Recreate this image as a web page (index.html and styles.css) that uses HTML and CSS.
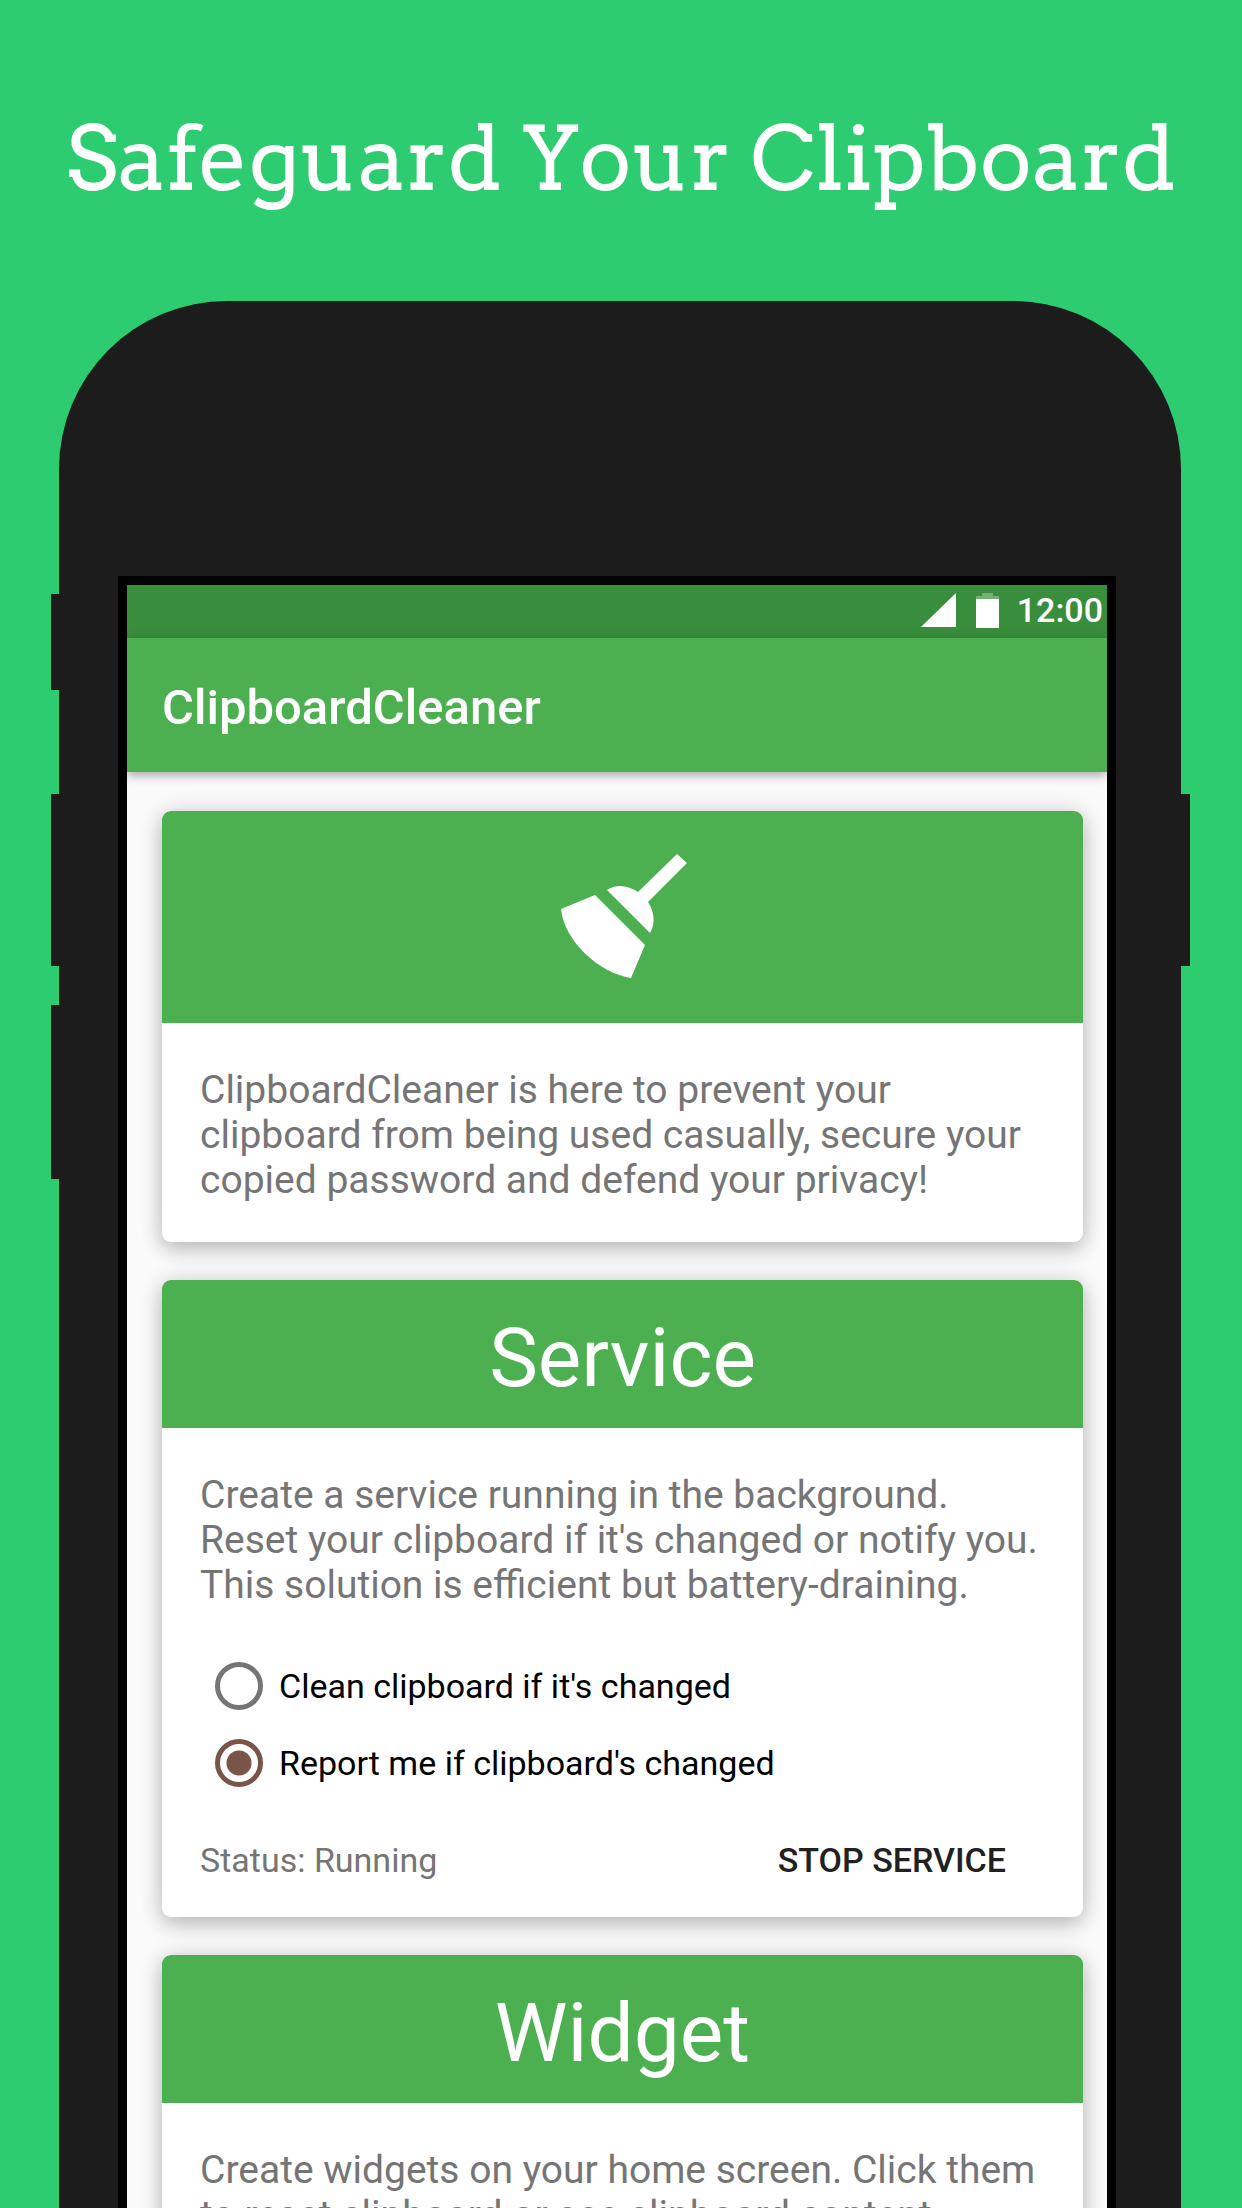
FILE: index.html
```html
<!DOCTYPE html>
<html lang="en">
<head>
<meta charset="utf-8">
<meta name="viewport" content="width=device-width, initial-scale=1">
<title>ClipboardCleaner</title>
<link rel="stylesheet" href="styles.css">
</head>
<body>
<main class="poster">
  <h1 class="headline">Safeguard Your Clipboard</h1>

  <div class="phone">
    <span class="key key-mute"></span>
    <span class="key key-up"></span>
    <span class="key key-down"></span>
    <span class="key key-power"></span>

    <div class="screen">
      <div class="status-bar">
        <svg class="signal" viewBox="0 0 35 34" aria-hidden="true"><path d="M35 0v34H0z"/></svg>
        <svg class="battery" viewBox="0 0 23 35" aria-hidden="true"><path class="battery-empty" d="M6 0h11v3h6v3H0V3h6z"/><path d="M0 6h23v29H0z"/></svg>
        <span class="clock">12:00</span>
      </div>
      <header class="toolbar"><h2 class="app-title">ClipboardCleaner</h2></header>

      <div class="cards">
        <section class="card">
          <div class="card-header card-header-icon">
            <svg class="broom" viewBox="0 0 126 125" aria-hidden="true">
              <path d="M116 0l10 9-39 39c6 9 8 21 2 31L46 36c10-7 22-4 31 2z"/>
              <path d="M34 41l50 50-14 33C37 119 3 86 0 55z"/>
            </svg>
          </div>
          <p class="card-text card-text-last">ClipboardCleaner is here to prevent your clipboard from being used casually, secure your copied password and defend your privacy!</p>
        </section>

        <section class="card">
          <h3 class="card-header">Service</h3>
          <p class="card-text">Create a service running in the background. Reset your clipboard if it's changed or notify you. This solution is efficient but battery-draining.</p>
          <form class="options">
            <label class="option"><input class="radio" type="radio" name="mode">Clean clipboard if it's changed</label>
            <label class="option"><input class="radio" type="radio" name="mode" checked>Report me if clipboard's changed</label>
          </form>
          <div class="actions">
            <span class="status">Status: Running</span>
            <button class="action" type="button">STOP SERVICE</button>
          </div>
        </section>

        <section class="card">
          <h3 class="card-header">Widget</h3>
          <p class="card-text card-text-last">Create widgets on your home screen. Click them to reset clipboard or see clipboard content.</p>
        </section>
      </div>
    </div>
  </div>
</main>
</body>
</html>
```

FILE: styles.css
```css
* {
  box-sizing: border-box;
}

body,
h1,
h2,
h3,
p {
  margin: 0;
}

body {
  background: #2ecc71;
  font-family: Roboto, "Noto Sans", sans-serif;
}

.poster {
  height: 100vh;
  overflow: hidden;
}

.headline {
  padding: 109px 0 92px;
  color: #fff;
  font-family: Arvo, "DejaVu Serif Condensed", "DejaVu Serif", serif;
  font-size: 88px;
  font-weight: 400;
  line-height: 100px;
  text-align: center;
  white-space: nowrap;
}

/* Phone body */
.phone {
  position: relative;
  margin: 0 61px 0 59px;
  padding: 275px 65px 160px 59px;
  border-radius: 168px;
  background: #1c1c1c;
}

.key {
  position: absolute;
  left: -8px;
  width: 16px;
  background: #1c1c1c;
}

.key-mute {
  top: 293px;
  height: 96px;
}

.key-up {
  top: 493px;
  height: 172px;
}

.key-down {
  top: 704px;
  height: 174px;
}

.key-power {
  top: 493px;
  right: -9px;
  left: auto;
  height: 172px;
}

.screen {
  overflow: hidden;
  border: 9px solid #000;
  background: #fafafa;
}

.status-bar {
  display: flex;
  align-items: center;
  justify-content: flex-end;
  height: 53px;
  padding: 0 4px 3px 0;
  background: #388e3c;
  color: #fff;
}

.signal {
  width: 35px;
  height: 34px;
  margin-right: 20px;
  fill: #fff;
}

.battery {
  width: 23px;
  height: 35px;
  margin-right: 18px;
  fill: #fff;
}

.battery-empty {
  fill-opacity: 0.3;
}

.clock {
  font-size: 34px;
  font-weight: 500;
}

.toolbar {
  position: relative;
  display: flex;
  align-items: center;
  height: 134px;
  padding: 4px 35px 0;
  background: #4caf50;
  box-shadow: 0 3px 10px rgba(0, 0, 0, 0.35);
}

.app-title {
  color: #fff;
  font-size: 49px;
  font-weight: 500;
}

/* Cards */
.cards {
  display: flex;
  flex-direction: column;
  gap: 38px;
  padding: 39px 24px 39px 35px;
}

.card {
  border-radius: 9px;
  background: #fff;
  box-shadow: 0 8px 20px rgba(0, 0, 0, 0.2), 0 0 24px rgba(0, 0, 0, 0.12);
}

.card-header {
  padding: 30px 0 22px;
  border-radius: 9px 9px 0 0;
  background: #4caf50;
  color: #fff;
  font-size: 82px;
  font-weight: 400;
  line-height: 96px;
  text-align: center;
}

.card-header-icon {
  display: flex;
  justify-content: center;
  padding: 43px 0 44px 2px;
}

.broom {
  width: 126px;
  height: 125px;
  fill: #fff;
}

.card-text {
  padding: 45px 38px 0;
  color: #757575;
  font-size: 39px;
  line-height: 45px;
}

.card-text-last {
  padding-bottom: 39px;
}

.options {
  padding: 39px 38px 0 53px;
}

.option {
  display: flex;
  align-items: center;
  height: 77px;
  color: #000;
  font-size: 34px;
}

.radio {
  flex: none;
  width: 48px;
  height: 48px;
  margin: 0 16px 0 0;
  border: 5px solid #757575;
  border-radius: 50%;
  background: #fff;
  appearance: none;
}

.radio:checked {
  border-color: #795548;
  background: radial-gradient(circle, #795548 12px, #fff 13px);
}

.actions {
  display: flex;
  align-items: center;
  justify-content: space-between;
  padding: 21px 38px 19px;
  font-size: 34px;
}

.status {
  color: #757575;
}

.action {
  height: 76px;
  padding: 0 39px;
  border: 0;
  background: none;
  color: #212121;
  font: inherit;
  font-weight: 500;
}
```
